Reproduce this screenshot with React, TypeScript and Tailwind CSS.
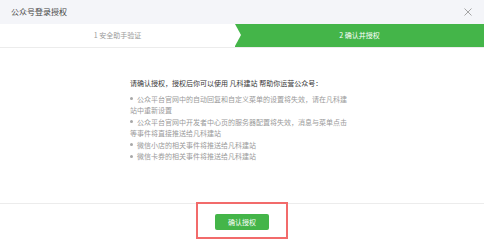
import React from 'react'

const font = { fontFamily: '"Noto Sans CJK SC", "Liberation Sans", sans-serif' }

// bullet rows, line breaks follow the reference
const items: string[][] = [
  ['公众平台官网中的自动回复和自定义菜单的设置将失效，请在凡科建', '站中重新设置'],
  ['公众平台官网中开发者中心页的服务器配置将失效，消息与菜单点击', '等事件将直接推送给凡科建站'],
  ['微信小店的相关事件将推送给凡科建站'],
  ['微信卡券的相关事件将推送给凡科建站'],
]

export default function App() {
  return (
    <div className="w-[484px] h-[243px] bg-white flex flex-col overflow-hidden" style={font}>
      {/* header */}
      <div className="h-[24px] bg-[#f4f5f9] flex items-center justify-between pl-[11px] pr-[12px]">
        <span className="text-[8px] leading-none text-[#454545]">公众号登录授权</span>
        <svg width="8" height="8" viewBox="0 0 8 8" className="block">
          <path d="M0.5 0.5 L7.5 7.5 M7.5 0.5 L0.5 7.5" stroke="#a5a5a5" strokeWidth="1" />
        </svg>
      </div>

      {/* steps */}
      <div className="h-[24px] flex border-b border-[#ececec] text-[7px] leading-none">
        <div className="w-[235px] flex items-center justify-center text-[#9a9a9a]">1 安全助手验证</div>
        <div className="relative flex-1 bg-[#44b549] flex items-center justify-center text-white">
          <div className="absolute left-0 top-0 w-0 h-0 border-t-[11.5px] border-b-[11.5px] border-l-[6px] border-t-transparent border-b-transparent border-l-white" />
          2 确认并授权
        </div>
      </div>

      {/* content */}
      <div className="flex-1 border-b border-[#ececec] pl-[130px] pt-[30px] text-[7px] leading-[11.5px]">
        <p className="text-[#353535] whitespace-nowrap mb-[4px]">请确认授权，授权后你可以使用 凡科建站 帮助你运营公众号：</p>
        {items.map((lines, i) => (
          <p key={i} className="text-[#9a9a9a] whitespace-nowrap">
            <span className="inline-block w-[3px] h-[3px] rounded-full bg-[#a8a8a8] align-middle mr-[4px] relative -top-[1px]" />
            {lines.map((l, j) => (
              <React.Fragment key={j}>
                {j > 0 && <br />}
                {l}
              </React.Fragment>
            ))}
          </p>
        ))}
      </div>

      {/* footer */}
      <div className="h-[39px] flex justify-center items-start pt-[10px]">
        <div className="relative flex">
          <button className="block w-[54px] h-[16px] bg-[#44b549] rounded-[2px] text-white text-[7px] leading-none">确认授权</button>
          <div className="absolute -left-[19px] -right-[19px] -top-[12px] -bottom-[9px] border-2 border-[#f26b6b]" />
        </div>
      </div>
    </div>
  )
}
